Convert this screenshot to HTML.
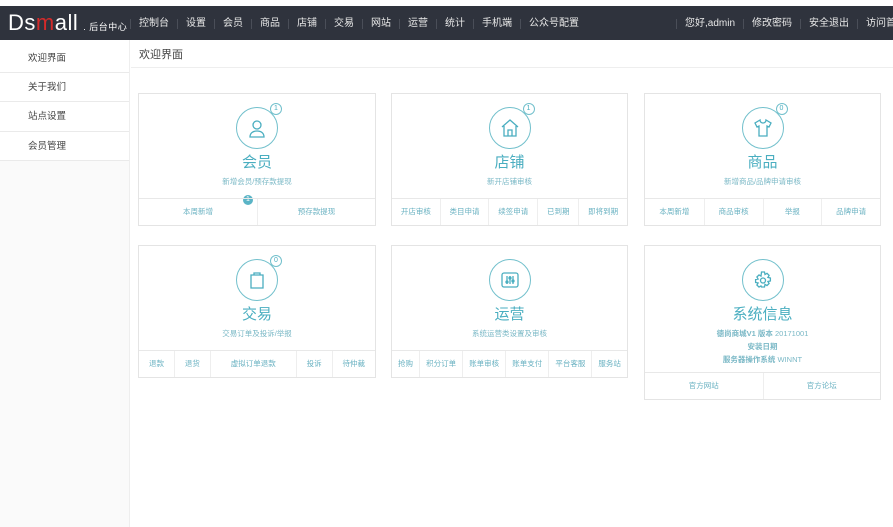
<!DOCTYPE html>
<html><head><meta charset="utf-8"><style>
*{margin:0;padding:0;box-sizing:border-box}
body{width:893px;height:527px;overflow:hidden;background:#fff;font-family:"Liberation Sans","Noto Sans CJK SC",sans-serif;position:relative}
.top{position:absolute;left:0;top:6px;width:893px;height:34px;background:#2f333d;color:#e8e8e8;font-size:10px}
.logo{position:absolute;left:8px;top:4px;color:#fff;font-size:22px;letter-spacing:0.5px}
.logo b{color:#d42a2a;font-weight:normal}
.logo small{font-size:9px;margin-left:2px}
.nav{position:absolute;top:12px;font-size:10px;white-space:nowrap}
.nav span{display:inline-block;padding:0 8px;border-left:1px solid #4a4e58;line-height:10px}
.side{position:absolute;left:0;top:40px;width:130px;height:487px;background:#fafafa;border-right:1px solid #eee}
.side div{height:29.3px;line-height:29px;padding-left:28px;font-size:9.5px;color:#444;border-bottom:1px solid #eaeaea;background:#fff}
.side div:first-child{height:33px;line-height:37px}
.crumb{position:absolute;left:139px;top:46px;font-size:11px;color:#444}
.hl{position:absolute;left:131px;top:67px;width:762px;height:1px;background:#eee}
.card{position:absolute;border:1px solid #e4e4e4;background:#fff;text-align:center;color:#4aaec0}
.ic{position:absolute;left:50%;top:13px;margin-left:-21px;width:42px;height:42px;border:1.5px solid #72c0cc;border-radius:50%}
.ic svg{position:absolute;left:10px;top:10px}
.bd{position:absolute;right:-5px;top:-5px;width:12px;height:12px;border:1px solid #72c0cc;border-radius:50%;background:#fff;font-size:7px;line-height:10px;color:#4aaec0}
.t{position:absolute;left:0;right:0;top:57px;font-size:15px}
.s{position:absolute;left:0;right:0;top:82px;font-size:7.5px;color:#7ab8c6}
.b{position:absolute;left:0;right:0;bottom:0;height:27px;display:flex;border-top:1px solid #e8e8e8}
.b div{flex:1 1 auto;font-size:7.5px;line-height:26px;color:#6ab2c2;border-left:1px solid #eee}
.b div:first-child{border-left:none}
</style></head><body>
<div class="top">
<div class="logo">Ds<b>m</b>all<small> . 后台中心</small></div>
<div class="nav" style="left:130px"><span>控制台</span><span>设置</span><span>会员</span><span>商品</span><span>店铺</span><span>交易</span><span>网站</span><span>运营</span><span>统计</span><span>手机端</span><span>公众号配置</span></div>
<div class="nav" style="left:676px"><span>您好,admin</span><span>修改密码</span><span>安全退出</span><span>访问首页</span></div>
</div>
<div class="side"><div>欢迎界面</div><div>关于我们</div><div>站点设置</div><div>会员管理</div></div>
<div class="crumb">欢迎界面</div><div class="hl"></div>

<div class="card" style="left:138px;top:93px;width:238px;height:133px">
<div class="ic"><svg width="20" height="20" viewBox="0 0 20 20" fill="none" stroke="#4aaec0" stroke-width="1.3"><circle cx="10" cy="7" r="4"/><path d="M3 19c0-4 3-6 7-6s7 2 7 6z"/></svg><div class="bd">1</div></div>
<div class="t">会员</div><div class="s">新增会员/预存款提现</div>
<div style="position:absolute;left:104px;top:101px;width:10px;height:10px;border-radius:50%;background:#5ab4c6;color:#fff;font-size:7px;line-height:10px">1</div>
<div class="b"><div style="width:50%">本周新增</div><div style="width:50%">预存款提现</div></div></div>

<div class="card" style="left:391px;top:93px;width:237px;height:133px">
<div class="ic"><svg width="20" height="20" viewBox="0 0 20 20" fill="none" stroke="#4aaec0" stroke-width="1.3"><path d="M2 9l8-7 8 7M4 8v10h12V8M8 18v-6h4v6"/></svg><div class="bd">1</div></div>
<div class="t">店铺</div><div class="s">新开店铺审核</div>
<div class="b"><div>开店审核</div><div>类目申请</div><div>续签申请</div><div>已到期</div><div>即将到期</div></div></div>

<div class="card" style="left:644px;top:93px;width:237px;height:133px">
<div class="ic"><svg width="20" height="20" viewBox="0 0 20 20" fill="none" stroke="#4aaec0" stroke-width="1.3"><path d="M7 2L2 5l2 4 2-1v10h8V8l2 1 2-4-5-3c0 2-1.5 3-3 3S7 4 7 2z"/></svg><div class="bd">0</div></div>
<div class="t">商品</div><div class="s">新增商品/品牌申请审核</div>
<div class="b"><div style="width:25%">本周新增</div><div style="width:25%">商品审核</div><div style="width:25%">举报</div><div style="width:25%">品牌申请</div></div></div>

<div class="card" style="left:138px;top:245px;width:238px;height:133px">
<div class="ic"><svg width="20" height="20" viewBox="0 0 20 20" fill="none" stroke="#4aaec0" stroke-width="1.3"><path d="M7 5V3h6v2M4 5h12v13H4z"/></svg><div class="bd">0</div></div>
<div class="t">交易</div><div class="s">交易订单及投诉/举报</div>
<div class="b"><div>退款</div><div>退货</div><div style="flex-grow:2">虚拟订单退款</div><div>投诉</div><div>待仲裁</div></div></div>

<div class="card" style="left:391px;top:245px;width:237px;height:133px">
<div class="ic"><svg width="20" height="20" viewBox="0 0 20 20" fill="none" stroke="#4aaec0" stroke-width="1.3"><rect x="2" y="3" width="16" height="14" rx="2"/><path d="M7 6v8M10 6v8M13 6v8"/><circle cx="7" cy="12" r="1"/><circle cx="10" cy="8" r="1"/><circle cx="13" cy="11" r="1"/></svg></div>
<div class="t">运营</div><div class="s">系统运营类设置及审核</div>
<div class="b"><div>抢购</div><div>积分订单</div><div>账单审核</div><div>账单支付</div><div>平台客服</div><div>服务站</div></div></div>

<div class="card" style="left:644px;top:245px;width:237px;height:155px">
<div class="ic"><svg width="20" height="20" viewBox="0 0 20 20" fill="none" stroke="#4aaec0" stroke-width="1.3"><path d="M8.5 2h3l.5 2.5 2-1.2 2.1 2.1-1.2 2 2.5.6v3l-2.5.5 1.2 2-2.1 2.1-2-1.2-.5 2.6h-3L8 15.9l-2 1.2-2.1-2.1 1.2-2L2.6 12.5v-3L5.1 9l-1.2-2L6 4.9l2 1.2z"/><circle cx="10" cy="10.5" r="2.5"/></svg></div>
<div class="t">系统信息</div>
<div class="s" style="top:82px"><b>德尚商城V1 版本</b> 20171001</div>
<div class="s" style="top:95px"><b>安装日期</b></div>
<div class="s" style="top:108px"><b>服务器操作系统</b> WINNT</div>
<div class="b"><div style="width:50%">官方网站</div><div style="width:50%">官方论坛</div></div></div>
</body></html>
